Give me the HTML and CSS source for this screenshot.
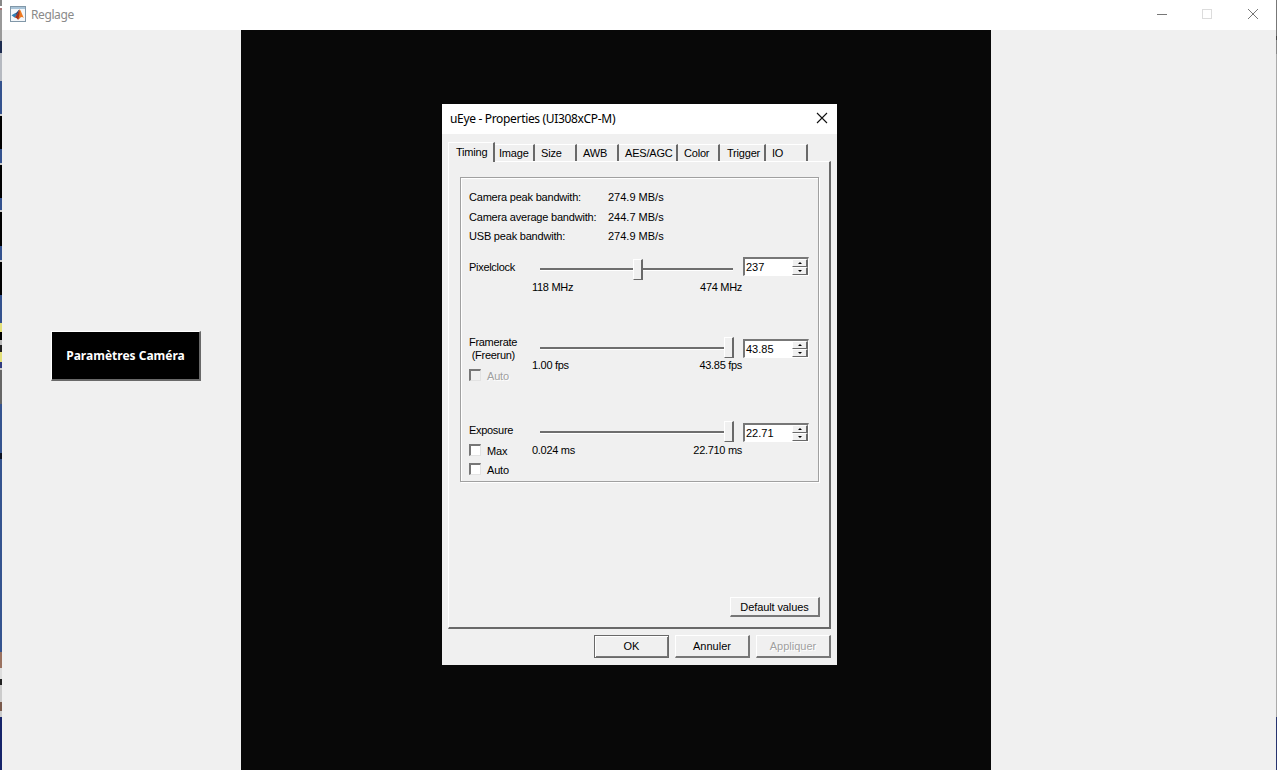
FILE: index.html
```html
<!DOCTYPE html>
<html lang="fr">
<head>
<meta charset="utf-8">
<title>Reglage</title>
<link rel="stylesheet" href="styles.css">
</head>
<body>
<div class="screen">
  <div class="desktop-left"></div>
  <div class="app">
    <header class="app-title">
      <svg class="logo" width="16" height="16" viewBox="0 0 16 16">
        <rect x=".5" y=".5" width="15" height="15" fill="#f4f7fa" stroke="#8197a8"/>
        <rect x="1" y="1" width="14" height="2" fill="#a9c4d8"/>
        <path d="M1.500 9.200 5 7.300 7 9.400 4.500 11.500z" fill="#2f7fb5"/>
        <path d="M5 7.300C7 7 8 4 9.500 3.500L7 9.400z" fill="#244a7c"/>
        <path d="M9.500 3.500C8.500 5 7.500 9 4.500 11.500c2 0 2.500 1.500 3.500 2.200C10 12.500 10 10.500 11.500 10.500z" fill="#a3331d"/>
        <path d="M9.500 3.500C11 4 12 8.500 14 12c-2-1.600-3.500-1.500-6 1.700 1.300-3 1.800-6.500 1.500-10.200z" fill="#ee7b22"/>
      </svg>
      <span class="app-name">Reglage</span>
      <svg class="controls" width="104" height="12" viewBox="0 0 104 12" fill="none">
        <path d="M1 6.500h10" stroke="#777"/>
        <rect x="46.500" y="1.500" width="9" height="9" stroke="#dcdcdc"/>
        <path d="M92 1l10 10M102 1l-10 10" stroke="#777"/>
      </svg>
    </header>
    <main class="app-body">
      <aside class="side"><button class="camera-btn">Paramètres Caméra</button></aside>
      <section class="viewport">
        <div class="dialog">
          <header class="dlg-title">
            <span>uEye - Properties (UI308xCP-M)</span>
            <svg width="12" height="12" viewBox="0 0 12 12"><path d="M1 1l10 10M11 1L1 11" stroke="#111" stroke-width="1.100"/></svg>
          </header>
          <nav class="tabs">
            <span class="tab active">Timing</span><span class="tab t-image">Image</span><span class="tab t-size">Size</span><span class="tab t-awb">AWB</span><span class="tab t-aes">AES/AGC</span><span class="tab t-color">Color</span><span class="tab t-trigger">Trigger</span><span class="tab t-io">IO</span>
          </nav>
          <div class="panel">
            <div class="group">
              <div class="info">
                <span>Camera peak bandwith:</span><span class="value">274.9 MB/s</span>
                <span>Camera average bandwith:</span><span class="value">244.7 MB/s</span>
                <span>USB peak bandwith:</span><span class="value">274.9 MB/s</span>
              </div>
              <div class="row pixelclock">
                <div class="labels"><div class="name">Pixelclock</div></div>
                <div class="slider">
                  <div class="track"><i class="thumb mid"></i></div>
                  <div class="range"><span>118 MHz</span><span>474 MHz</span></div>
                </div>
                <div class="spin"><span>237</span><div class="arrows"><b></b><b class="down"></b></div></div>
              </div>
              <div class="row framerate">
                <div class="labels"><div class="name">Framerate<br>&nbsp;(Freerun)</div><label class="check off"><i></i><span>Auto</span></label></div>
                <div class="slider">
                  <div class="track"><i class="thumb"></i></div>
                  <div class="range"><span>1.00 fps</span><span>43.85 fps</span></div>
                </div>
                <div class="spin"><span>43.85</span><div class="arrows"><b></b><b class="down"></b></div></div>
              </div>
              <div class="row exposure">
                <div class="labels"><div class="name">Exposure</div><label class="check"><i></i><span>Max</span></label><label class="check"><i></i><span>Auto</span></label></div>
                <div class="slider">
                  <div class="track"><i class="thumb"></i></div>
                  <div class="range"><span>0.024 ms</span><span>22.710 ms</span></div>
                </div>
                <div class="spin"><span>22.71</span><div class="arrows"><b></b><b class="down"></b></div></div>
              </div>
            </div>
            <button class="btn defaults">Default values</button>
          </div>
          <footer class="actions">
            <button class="btn primary">OK</button>
            <button class="btn">Annuler</button>
            <button class="btn disabled">Appliquer</button>
          </footer>
        </div>
      </section>
    </main>
  </div>
  <div class="desktop-right"></div>
</div>
</body>
</html>
```
FILE: styles.css
```css
* { box-sizing: border-box; }
body { margin: 0; overflow: hidden; }
button { font: inherit; padding: 0; margin: 0; border-radius: 0; }

.screen { display: flex; width: 1277px; height: 770px; }
.desktop-left {
  width: 2px;
  background: linear-gradient(
    #888 0 6px, #fff 6px 8px, #a77 8px 10px, #999 10px 41px, #1d2c50 41px 53px, #b5b9c0 53px 81px,
    #34528e 81px 114px, #ccc 114px 116px, #000 116px 149px, #34528e 149px 163px, #ccc 163px 165px,
    #000 165px 198px, #34528e 198px 210px, #ccc 210px 212px, #000 212px 246px, #34528e 246px 260px,
    #ccc 260px 262px, #000 262px 295px, #34528e 295px 323px, #e3e07a 323px 332px, #000 332px 340px,
    #bbb 340px 345px, #222 345px 352px, #e3e07a 352px 362px, #303c80 362px 368px, #ccc 368px 370px,
    #666 370px 404px, #35548f 404px 453px, #0b1224 453px 459px, #35548f 459px 652px,
    #9a7260 652px 668px, #ddd 668px 679px, #222 679px 685px, #ccc 685px 702px, #7a5a4c 702px 711px,
    #ccc 711px 717px, #16246a 717px);
}
.desktop-right {
  width: 1px;
  background: linear-gradient(#777 0 36px, #444 36px 40px, #888 40px 54px, #aaa 54px 717px, #27346f 717px);
}
.app { flex: 1; display: flex; flex-direction: column; }
.app-title { height: 30px; display: flex; align-items: center; padding: 0 16px 0 8px; background: #fff; }
.logo { margin-top: -2px; }
.app-name { flex: 1; padding-left: 5px; color: #8a8a8a; font: 12px/16px "Noto Sans", sans-serif; letter-spacing: -.4px; }
.controls { margin-top: -2px; }
.app-body { flex: 1; display: flex; background: #f0f0f0; }
.side { width: 239px; padding: 301px 0 0 49px; }
.camera-btn {
  display: block; width: 150px; height: 50px;
  border: solid; border-width: 1px 2px 2px 1px; border-color: #fff #696969 #696969 #fff;
  background: #000; color: #fff;
  font: bold 12px/16px "Noto Sans", sans-serif;
}
.viewport { position: relative; width: 750px; background: #080808; }

.dialog {
  position: absolute; left: 201px; top: 74px; width: 395px; height: 561px;
  display: flex; flex-direction: column;
  background: #f0f0f0; color: #000;
  font: 11px/13px "Liberation Sans", Arial, sans-serif; letter-spacing: -.2px;
  white-space: nowrap;
}
.dlg-title {
  height: 30px; display: flex; align-items: center; justify-content: space-between;
  padding: 0 9px 2px 8px; background: #fff;
  font: 12px/16px "Noto Sans", sans-serif; letter-spacing: -.33px;
}
.dlg-title span { padding-top: 2px; }
.tabs { height: 27px; padding: 8px 0 0 6px; display: flex; align-items: flex-end; }
.tab {
  height: 17px; padding: 2px 0 0 6px;
  border: solid; border-width: 1px 2px 0 0; border-color: #fff #696969 #696969 #fff;
}
.tab.active {
  width: 47px; height: 20px; padding: 3px 0 0 7px; margin-bottom: -1px; z-index: 1;
  border-left-width: 1px; background: #f0f0f0;
}
.t-image { width: 40px; padding-left: 4px; }
.t-size { width: 42px; }
.t-awb { width: 42px; }
.t-aes { width: 59px; }
.t-color { width: 42px; }
.t-trigger { width: 46px; padding-left: 7px; }
.t-io { width: 42px; }

.panel {
  width: 383px; height: 468px; margin-left: 6px; padding: 15px 9px 0 11px;
  border: solid; border-width: 1px 2px 2px 1px; border-color: #fff #696969 #696969 #fff;
}
.group { width: 359px; height: 305px; padding: 9px 0 0 8px; border: 1px solid #a0a0a0; box-shadow: 1px 1px #fff, inset 1px 1px #fff; }
.info { height: 70px; padding-top: 1px; display: grid; grid-template-columns: 139px 1fr; grid-auto-rows: 19.5px; align-content: start; align-items: center; }
.value { letter-spacing: 0; }
.row { display: grid; grid-template-columns: 63px 211px 66px; align-items: start; }
.pixelclock { height: 82px; }
.framerate { height: 84px; }
.name { letter-spacing: -.3px; }
.pixelclock .name { margin-top: 4px; }
.framerate .name { margin-top: -3px; }
.exposure .name { margin-top: 1px; margin-bottom: 7px; }
.framerate .check { margin-top: 7px; }
.check { display: flex; align-items: flex-start; gap: 6px; height: 13px; margin-bottom: 6px; }
.check span { padding-top: 1px; }
.check i { width: 12px; height: 12px; background: #fff; border: solid; border-width: 2px 1px 1px 2px; border-color: #777 #e3e3e3 #e3e3e3 #777; }
.check.off { color: #a0a0a0; text-shadow: 1px 1px #fff; }
.check.off i { background: #f0f0f0; }
.track {
  position: relative; width: 193px; height: 3px; margin: 11px 0 0 8px;
  background: #6e6e6e; border-bottom: 1px solid #fff;
}
.framerate .track, .exposure .track { margin-top: 8px; }
.thumb {
  position: absolute; right: -1px; top: -10px; width: 10px; height: 21px; background: #f0f0f0;
  border: solid; border-width: 1px 2px 1px 1px; border-color: #fff #696969 #696969 #fff;
}
.thumb.mid { right: 90px; top: -9px; }
.range { display: flex; justify-content: space-between; margin-top: 10px; padding-right: 1px; letter-spacing: -.3px; }
.framerate .range { margin-top: 9px; }
.spin {
  height: 19px; display: flex; justify-content: space-between; background: #fff;
  border: solid; border-width: 2px 1px 1px 2px; border-color: #777 #fff #fff #777;
}
.spin span { padding: 2px 0 0 1px; letter-spacing: 0; }
.arrows { width: 16px; display: grid; grid-template-rows: 8px 8px; }
.arrows b {
  display: flex; justify-content: center; align-items: center; background: #f0f0f0;
  border: solid; border-width: 1px 2px 1px 1px; border-color: #fff #696969 #696969 #fff;
}
.arrows b::after { content: ""; border: solid transparent; border-width: 0 2px 2px; border-bottom-color: #000; }
.arrows .down::after { border-width: 2px 2px 0; border-top-color: #000; }

.btn {
  width: 75px; height: 23px; background: #f0f0f0; color: #000; letter-spacing: 0;
  border: solid; border-width: 1px 2px 2px 1px; border-color: #fff #777 #777 #fff;
}
.defaults { display: block; width: 90px; height: 20px; margin: 115px 0 0 auto; padding-top: 1px; letter-spacing: -.1px; }
.primary { border: 1px solid #696969; box-shadow: inset 1px 1px #fff, inset -1px -1px #777; }
.disabled { color: #a0a0a0; text-shadow: 1px 1px #fff; }
.actions { display: flex; justify-content: flex-end; gap: 6px; padding: 6px 6px 0 0; }
```
